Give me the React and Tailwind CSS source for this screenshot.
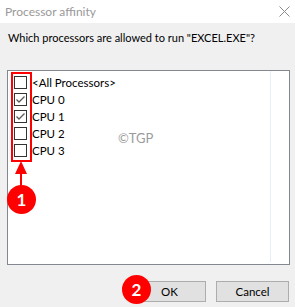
const cpus = [
  { label: "<All Processors>", checked: false },
  { label: "CPU 0", checked: true },
  { label: "CPU 1", checked: true },
  { label: "CPU 2", checked: false },
  { label: "CPU 3", checked: false },
];

function Box({ checked }) {
  return (
    <div className="w-[13px] h-[13px] border border-[#333333] bg-white flex items-center justify-center shrink-0">
      {checked && (
        <svg width="11" height="11" viewBox="0 0 11 11">
          <path d="M1.5 5.5 L4 8 L9.5 2.5" fill="none" stroke="#5a5a5a" strokeWidth="1.3" />
        </svg>
      )}
    </div>
  );
}

function Badge({ n, className }) {
  return (
    <div
      className={
        "absolute w-[29px] h-[29px] rounded-full bg-[#ff0000] text-white flex items-center justify-center text-[17px] font-bold " +
        className
      }
    >
      {n}
    </div>
  );
}

export default function App() {
  return (
    <div className="relative w-[295px] h-[307px] bg-[#f0f0f0] overflow-hidden text-[11.5px] text-black font-['Lato',sans-serif]">
      <div className="h-[23px] bg-white flex items-center justify-between pl-[5px] pr-[5px]">
        <span className="text-[#999999] text-[12px]">Processor affinity</span>
        <svg width="11" height="11" viewBox="0 0 11 11">
          <path d="M0.5 0.5 L10.5 10.5 M10.5 0.5 L0.5 10.5" stroke="#8a8a8a" strokeWidth="1" />
        </svg>
      </div>

      <div className="pl-[8px] pt-[6px] leading-[17px] text-[11px]">Which processors are allowed to run "EXCEL.EXE"?</div>

      <div className="relative ml-[7px] mt-[24px] w-[283px] h-[195px] border border-[#828790] bg-white">
        <div className="pt-[3px] pl-[6px] flex flex-col">
          {cpus.map((c) => (
            <div key={c.label} className="h-[17px] flex items-center gap-[5px]">
              <Box checked={c.checked} />
              <span className="leading-[13px]">{c.label}</span>
            </div>
          ))}
        </div>
        <div className="absolute top-0 bottom-[2px] left-[262px] w-px bg-[#e8eef8]" />
        <span className="absolute left-[110px] top-[58px] text-[#9a9a9a] text-[13px]">©TGP</span>
      </div>

      <div className="flex justify-end gap-[10px] pr-[6px] mt-[16px]">
        <button className="w-[73px] h-[21px] bg-[#e1e1e1] border border-[#adadad] leading-none">OK</button>
        <button className="w-[73px] h-[21px] bg-[#e1e1e1] border border-[#adadad] leading-none">Cancel</button>
      </div>

      <div className="absolute left-[11px] top-[72px] w-[21px] h-[90px] border-2 border-[#ff0000]" />
      <svg className="absolute left-[14px] top-[161px]" width="14" height="26" viewBox="0 0 14 26">
        <path d="M7 0 L13 13 L1 13 Z" fill="#ff0000" />
        <rect x="6" y="12" width="2" height="14" fill="#ff0000" />
      </svg>
      <Badge n="1" className="left-[7px] top-[185px]" />
      <Badge n="2" className="left-[122px] top-[275px]" />
    </div>
  );
}
